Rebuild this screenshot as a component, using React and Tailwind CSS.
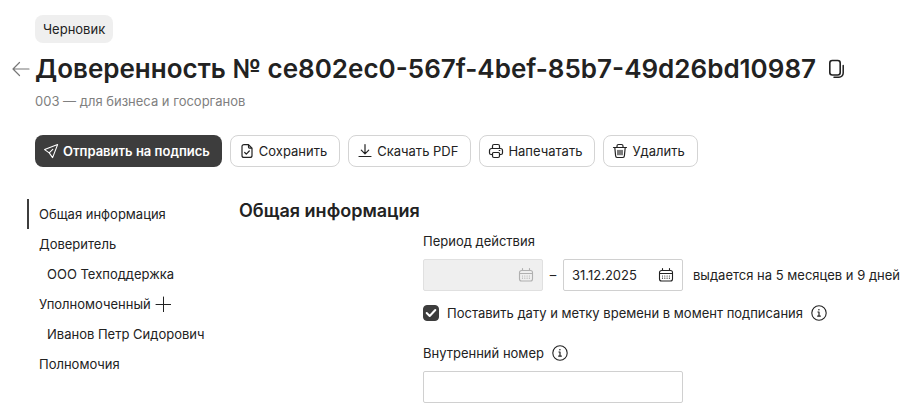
import { useState } from 'react'

function Icon({ size = 16, className = '', children }) {
  return (
    <svg
      width={size}
      height={size}
      viewBox={`0 0 ${size} ${size}`}
      fill="none"
      stroke="currentColor"
      strokeWidth="1.2"
      strokeLinecap="round"
      strokeLinejoin="round"
      className={`shrink-0 ${className}`}
      aria-hidden="true"
    >
      {children}
    </svg>
  )
}

function SendIcon() {
  return (
    <Icon>
      <path d="M1.6 6.6 14.6 1.6 9.6 14.6 6.2 9.9ZM6.2 9.9 9.8 6.3" strokeWidth="1.1" />
    </Icon>
  )
}

function SaveIcon() {
  return (
    <Icon>
      <path d="M9.5 1.6H5a2 2 0 0 0-2 2v8.8a2 2 0 0 0 2 2h6a2 2 0 0 0 2-2V5.1L9.5 1.6ZM9.5 1.6v2.5a1 1 0 0 0 1 1H13" />
      <path d="M5.7 9.5 7.3 11.1 10.3 8" />
    </Icon>
  )
}

function DownloadIcon() {
  return (
    <Icon>
      <path d="M8 1.5v9M4.3 7.1 8 10.8l3.7-3.7M2 13.5h12" />
    </Icon>
  )
}

function PrintIcon() {
  return (
    <Icon>
      <path d="M4.5 5.5V3A1.5 1.5 0 0 1 6 1.5h4A1.5 1.5 0 0 1 11.5 3v2.5" />
      <path d="M4.5 11.5H3A1.5 1.5 0 0 1 1.5 10V7.5a2 2 0 0 1 2-2h9a2 2 0 0 1 2 2V10a1.5 1.5 0 0 1-1.5 1.5h-1.5" />
      <path d="M5.5 9.5h5a1 1 0 0 1 1 1V13a1.5 1.5 0 0 1-1.5 1.5H6A1.5 1.5 0 0 1 4.5 13v-2.5a1 1 0 0 1 1-1ZM11.2 7.5h.6" />
    </Icon>
  )
}

function TrashIcon() {
  return (
    <Icon>
      <path d="M1.5 4.5h13M5 4.5V3a1.5 1.5 0 0 1 1.5-1.5h3A1.5 1.5 0 0 1 11 3v1.5M2.8 4.5l.8 8.3a2 2 0 0 0 2 1.7h4.8a2 2 0 0 0 2-1.7l.8-8.3M6 7.3v4.4M8 7.3v4.4M10 7.3v4.4" />
    </Icon>
  )
}

function CalendarIcon() {
  return (
    <Icon>
      <path
        d="M3.5 3.5h9a2 2 0 0 1 2 2V12a2 2 0 0 1-2 2h-9a2 2 0 0 1-2-2V5.5a2 2 0 0 1 2-2ZM4.5 1.5v2M11.5 1.5v2M1.5 6.5h13"
        strokeWidth="1.1"
      />
      <path d="M4.5 9h.01M6.8 9h.01M9.1 9h.01M11.4 9h.01M4.5 11.2h.01M6.8 11.2h.01M9.1 11.2h.01M11.4 11.2h.01" />
    </Icon>
  )
}

function CopyIcon() {
  return (
    <Icon size={20}>
      <rect x="1.8" y="1.5" width="10.4" height="14.5" rx="2.5" strokeWidth="1.6" />
      <path d="M15.2 6.5V14a4.2 4.2 0 0 1-4.2 4.2H6" strokeWidth="1.5" />
    </Icon>
  )
}

function InfoIcon() {
  return (
    <Icon>
      <circle cx="8" cy="8" r="7.2" strokeWidth="1.1" />
      <path d="M6.5 7H8v4.2M6.2 11.2h3.6" strokeLinecap="butt" />
      <path d="M7.9 4.7h.01" strokeWidth="1.5" />
    </Icon>
  )
}

const actions = [
  { label: 'Сохранить', icon: SaveIcon },
  { label: 'Скачать PDF', icon: DownloadIcon },
  { label: 'Напечатать', icon: PrintIcon },
  { label: 'Удалить', icon: TrashIcon },
]

function Header() {
  return (
    <header className="pl-[35px] pr-4">
      <span className="inline-flex h-7 items-center rounded-lg bg-[#efefef] px-2">Черновик</span>
      <div className="-ml-6 mt-2 flex h-9 items-center">
        <button type="button" aria-label="Назад" className="mr-1 w-5 text-[#777]">
          <Icon size={20}>
            <path d="M18 10H2M8.5 3.5 2 10l6.5 6.5" />
          </Icon>
        </button>
        <h1 className="whitespace-nowrap text-[26px] leading-9 font-semibold">
          Доверенность № ce802ec0-567f-4bef-85b7-49d26bd10987
        </h1>
        <button type="button" aria-label="Скопировать номер" className="ml-3">
          <CopyIcon />
        </button>
      </div>
      <p className="mt-1 text-[#808080]">003 — для бизнеса и госорганов</p>
    </header>
  )
}

function Toolbar() {
  return (
    <div className="mt-6 flex gap-2 pl-[35px]">
      <button
        type="button"
        className="flex h-8 items-center gap-1 rounded-lg bg-[#3d3d3d] pr-3 pl-2 font-semibold whitespace-nowrap text-white"
      >
        <SendIcon />
        Отправить на подпись
      </button>
      {actions.map(({ label, icon: ActionIcon }) => (
        <button
          key={label}
          type="button"
          className="flex h-8 items-center gap-1 rounded-lg border border-[#d4d4d4] bg-white pr-3 pl-2 whitespace-nowrap"
        >
          <ActionIcon />
          {label}
        </button>
      ))}
    </div>
  )
}

function Sidebar() {
  const row = 'flex h-[30px] items-center'
  return (
    <nav className="w-[239px] shrink-0 pl-[27px]">
      <ul>
        <li className={`${row} border-l-2 border-[#3d3d3d] pl-[10px]`}>
          <a href="#general">Общая информация</a>
        </li>
        <li className={`${row} pl-3`}>
          <a href="#principal">Доверитель</a>
        </li>
        <li className={`${row} pl-5`}>
          <a href="#company">ООО Техподдержка</a>
        </li>
        <li className={`${row} gap-1 pl-3`}>
          <a href="#agent">Уполномоченный</a>
          <button type="button" aria-label="Добавить уполномоченного">
            <Icon>
              <path d="M8.5 1v15M1 8.5h15" strokeWidth="1" />
            </Icon>
          </button>
        </li>
        <li className={`${row} pl-5`}>
          <a href="#person">Иванов Петр Сидорович</a>
        </li>
        <li className={`${row} pl-3`}>
          <a href="#powers">Полномочия</a>
        </li>
      </ul>
    </nav>
  )
}

function DateField({ label, value, onChange, disabled }) {
  return (
    <div
      className={`flex h-8 w-[120px] items-center rounded-xs border px-2 ${
        disabled ? 'border-[#e0e0e0] bg-[#efefef] text-[#b0b0b0]' : 'border-[#d0d0d0] bg-white'
      }`}
    >
      <input
        type="text"
        aria-label={label}
        value={value}
        onChange={onChange}
        disabled={disabled}
        className="w-full min-w-0 bg-transparent outline-none"
      />
      <CalendarIcon />
    </div>
  )
}

function GeneralInfo() {
  const [endDate, setEndDate] = useState('31.12.2025')
  const [stamp, setStamp] = useState(true)
  const [number, setNumber] = useState('')

  return (
    <section id="general" className="min-w-0 flex-1">
      <h2 className="text-lg leading-6 font-semibold">Общая информация</h2>
      <div className="mt-2 pl-[184px]">
        <div className="leading-5">Период действия</div>
        <div className="mt-2 flex items-center whitespace-nowrap">
          <DateField label="Дата начала" value="" disabled />
          <span className="w-5 text-center">–</span>
          <DateField label="Дата окончания" value={endDate} onChange={(e) => setEndDate(e.target.value)} />
          <span className="ml-[10px]">выдается на 5 месяцев и 9 дней</span>
        </div>
        <div className="mt-3 flex h-5 items-center whitespace-nowrap">
          <label className="flex items-center gap-2">
            <span className="relative flex size-4">
              <input
                type="checkbox"
                checked={stamp}
                onChange={(e) => setStamp(e.target.checked)}
                className="peer size-4 appearance-none rounded border border-[#3d3d3d] checked:bg-[#3d3d3d]"
              />
              <Icon className="pointer-events-none absolute inset-0 hidden text-white peer-checked:block">
                <path d="M3.7 8 6.7 11l5.6-6" strokeWidth="2" />
              </Icon>
            </span>
            Поставить дату и метку времени в момент подписания
          </label>
          <button type="button" aria-label="Подсказка о метке времени" className="ml-2">
            <InfoIcon />
          </button>
        </div>
        <div className="mt-5 flex h-5 items-center gap-2">
          <label htmlFor="number">Внутренний номер</label>
          <button type="button" aria-label="Подсказка о внутреннем номере">
            <InfoIcon />
          </button>
        </div>
        <input
          id="number"
          type="text"
          value={number}
          onChange={(e) => setNumber(e.target.value)}
          className="mt-2 block h-8 w-[260px] rounded-xs border border-[#d0d0d0] px-2 outline-none"
        />
      </div>
    </section>
  )
}

export default function App() {
  return (
    <div className="min-h-screen bg-white pt-[15px] font-['Inter','Liberation_Sans',sans-serif] text-[13px] leading-5 text-[#222]">
      <Header />
      <Toolbar />
      <main className="mt-8 flex">
        <Sidebar />
        <GeneralInfo />
      </main>
    </div>
  )
}
